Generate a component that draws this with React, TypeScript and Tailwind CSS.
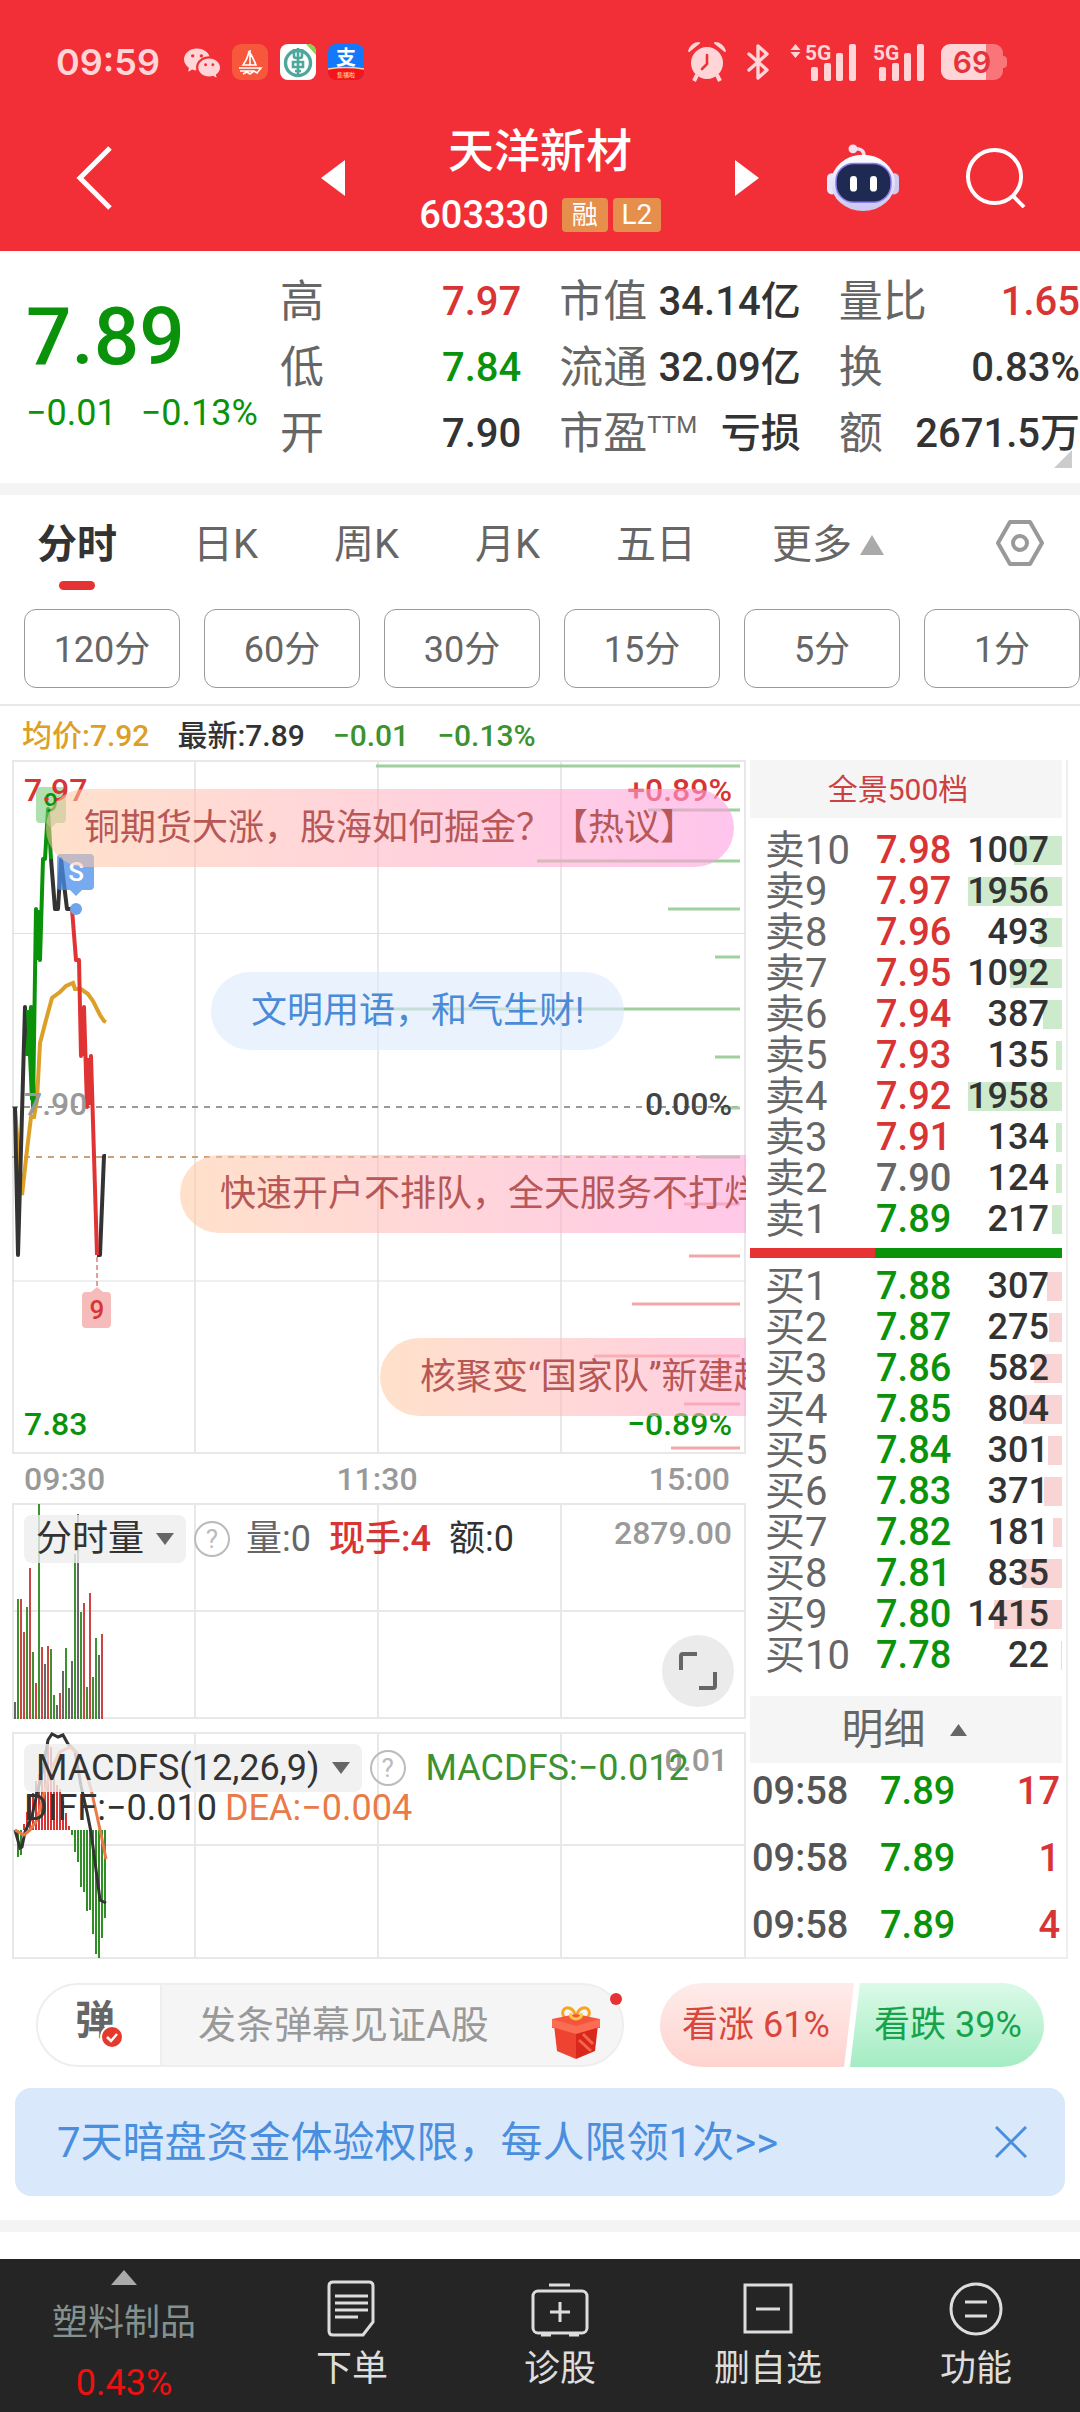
import { BsWechat } from "react-icons/bs";

const periods = ["120分", "60分", "30分", "15分", "5分", "1分"];
const tabs = ["日K", "周K", "月K", "五日"];

const stats = [
  { label: "高", value: "7.97", color: "text-[#d83434]" },
  { label: "市值", value: "34.14亿", color: "text-[#333]" },
  { label: "量比", value: "1.65", color: "text-[#d83434]" },
  { label: "低", value: "7.84", color: "text-[#0a930a]" },
  { label: "流通", value: "32.09亿", color: "text-[#333]" },
  { label: "换", value: "0.83%", color: "text-[#333]" },
  { label: "开", value: "7.90", color: "text-[#333]" },
  { label: "市盈", sup: "TTM", value: "亏损", color: "text-[#333]" },
  { label: "额", value: "2671.5万", color: "text-[#333]" },
];

const RED = "text-[#d83434]";
const GREEN = "text-[#0a930a]";
const GRAY = "text-[#666]";

type Order = { name: string; price: string; volume: number; color: string };

const sells: Order[] = [
  { name: "卖10", price: "7.98", volume: 1007, color: RED },
  { name: "卖9", price: "7.97", volume: 1956, color: RED },
  { name: "卖8", price: "7.96", volume: 493, color: RED },
  { name: "卖7", price: "7.95", volume: 1092, color: RED },
  { name: "卖6", price: "7.94", volume: 387, color: RED },
  { name: "卖5", price: "7.93", volume: 135, color: RED },
  { name: "卖4", price: "7.92", volume: 1958, color: RED },
  { name: "卖3", price: "7.91", volume: 134, color: RED },
  { name: "卖2", price: "7.90", volume: 124, color: GRAY },
  { name: "卖1", price: "7.89", volume: 217, color: GREEN },
];

const buys: Order[] = [
  { name: "买1", price: "7.88", volume: 307, color: GREEN },
  { name: "买2", price: "7.87", volume: 275, color: GREEN },
  { name: "买3", price: "7.86", volume: 582, color: GREEN },
  { name: "买4", price: "7.85", volume: 804, color: GREEN },
  { name: "买5", price: "7.84", volume: 301, color: GREEN },
  { name: "买6", price: "7.83", volume: 371, color: GREEN },
  { name: "买7", price: "7.82", volume: 181, color: GREEN },
  { name: "买8", price: "7.81", volume: 835, color: GREEN },
  { name: "买9", price: "7.80", volume: 1415, color: GREEN },
  { name: "买10", price: "7.78", volume: 22, color: GREEN },
];

const trades = [
  { time: "09:58", price: "7.89", volume: 17 },
  { time: "09:58", price: "7.89", volume: 1 },
  { time: "09:58", price: "7.89", volume: 4 },
];

// [y, x start, color]
const depthLines: [number, number, string][] = [
  [6, 364, "#9fd09f"],
  [50, 636, "#9fd09f"],
  [101, 525, "#9fd09f"],
  [149, 656, "#9fd09f"],
  [197, 703, "#9fd09f"],
  [249, 366, "#9fd09f"],
  [297, 703, "#9fd09f"],
  [348, 711, "#9fd09f"],
  [397, 688, "#9fd09f"],
  [444, 672, "#f3a8a8"],
  [496, 677, "#f3a8a8"],
  [544, 620, "#f3a8a8"],
  [596, 582, "#f3a8a8"],
  [644, 672, "#f3a8a8"],
  [688, 659, "#f3a8a8"],
];

const volumeHeights = [
  17, 120, 120, 87, 112, 151, 67, 36, 215, 72, 55, 73, 70, 24, 14, 26, 48, 71, 31, 58, 165, 205, 107,
  116, 32, 126, 42, 81, 64, 85,
];
const volumeColors = "kgrrgrgrgrkrggkrkgkkgkgrgrggkr";
const barColors: Record<string, string> = { k: "#666", g: "#3b922f", r: "#cc4444" };

const macdEnds = [
  125, 123, 92, 80, 65, 61, 49, 42, 31, 19, 10, 15, 42, 53, 57, 69, 81, 94, 103, 120, 130, 155, 160,
  179, 178, 202, 222, 226, 206, 186,
];

function StatusBar() {
  return (
    <div className="flex h-[124px] items-center justify-between pl-14 pr-[73px] text-[#ffd5d7]">
      <div className="flex items-center">
        <span className="mr-6 font-['Inter',sans-serif] text-[36px] font-semibold leading-10">09:59</span>
        <BsWechat className="mr-3 size-9" />
        <svg className="mr-3 size-9" viewBox="0 0 36 36" fill="none">
          <rect width="36" height="36" rx="9" fill="#f7583c" />
          <path d="M18 6v15M17 7c-1 6-3 10-6 14h13c-2-5-4-9-7-14M7 24h22l-4 5-3-2-4 3-3-2-4 2M8 27h14" stroke="#fff" strokeWidth="1.6" />
        </svg>
        <svg className="mr-3 size-9" viewBox="0 0 36 36" fill="none">
          <rect width="36" height="36" rx="8" fill="#fff" />
          <path d="M26 0h2a8 8 0 0 1 8 8v3z" fill="#8bcf4e" />
          <circle cx="18" cy="19" r="12.5" stroke="#4fa69a" strokeWidth="3.4" />
          <path d="M14 5v7q0 2 2 2h4q2 0 2-2V5M18 4v27M13 18h10v5H13zM15 27h6" stroke="#4fa69a" strokeWidth="2.6" />
        </svg>
        <svg className="size-9" viewBox="0 0 36 36">
          <rect width="36" height="36" rx="8" fill="#1478fa" />
          <path d="M0 25q18-3 36 0v3a8 8 0 0 1-8 8H8a8 8 0 0 1-8-8z" fill="#f5141b" />
          <path d="M0 25q18-3 36 0" stroke="#ffcf9a" strokeWidth="1.5" fill="none" />
          <text x="18" y="21" textAnchor="middle" fontSize="20" fontWeight="700" fill="#fff">支</text>
          <text x="18" y="33" textAnchor="middle" fontSize="6" fill="#ffe0b0">集福啦</text>
        </svg>
      </div>
      <div className="flex items-center">
        <svg className="mr-5 h-10 w-[38px]" viewBox="0 0 38 40" fill="none">
          <circle cx="19" cy="21" r="16" fill="currentColor" />
          <path d="M1 9q3-8 10-8zM37 9q-3-8-10-8z" fill="currentColor" stroke="currentColor" strokeWidth="2" strokeLinejoin="round" />
          <path d="M9 33l-3 6M29 33l3 6" stroke="currentColor" strokeWidth="4" />
          <path d="M19 13v9l-5 5" stroke="#f22f37" strokeWidth="2.6" strokeLinecap="round" />
        </svg>
        <svg className="mr-5 h-10 w-6" viewBox="0 0 24 40" fill="none" stroke="currentColor" strokeWidth="3.4" strokeLinejoin="round" strokeLinecap="round">
          <path d="M3 12l18 16-9 8V4l9 8L3 28" />
        </svg>
        <div className="flex">
          <svg className="mr-1 h-[38px] w-[11px]" viewBox="0 0 11 38" fill="currentColor">
            <path d="M5.5 1l5 6h-10zM5.5 15l5-6h-10z" />
          </svg>
          <Signal />
          <span className="w-4" />
          <Signal />
        </div>
        <div className="ml-4 flex items-center">
          <div className="flex h-9 w-[62px] items-center justify-center rounded-[9px] bg-[linear-gradient(90deg,#ffd5d7_73%,#fa757a_73%)] font-['Inter',sans-serif] text-[30px] font-semibold text-[#e6323c]">
            69
          </div>
          <div className="h-3 w-1 rounded-r bg-[#fa757a]" />
        </div>
      </div>
    </div>
  );
}

function Signal() {
  return (
    <svg className="h-[38px] w-[52px] overflow-visible" viewBox="0 0 52 38" fill="currentColor">
      <text x="0" y="17" fontSize="21" fontWeight="700">5G</text>
      <rect x="6" y="24" width="7" height="14" rx="2" />
      <rect x="19" y="20" width="7" height="18" rx="2" />
      <rect x="31" y="10" width="7" height="28" rx="2" />
      <rect x="44" y="1" width="7" height="37" rx="2" />
    </svg>
  );
}

function Robot() {
  return (
    <svg className="h-[68px] w-[74px]" viewBox="0 0 74 70" preserveAspectRatio="none" fill="none">
      <defs>
        <linearGradient id="shell" x1="0" y1="0" x2="0" y2="1">
          <stop offset="0" stopColor="#fff" />
          <stop offset="1" stopColor="#c9c6f2" />
        </linearGradient>
      </defs>
      <path d="M38 12q0-8-10-7" stroke="#f1dcee" strokeWidth="3.5" />
      <circle cx="27" cy="5" r="4.5" fill="#f4e2f2" />
      <rect x="1" y="30" width="10" height="22" rx="5" fill="#e6e7fb" />
      <rect x="63" y="30" width="10" height="22" rx="5" fill="#cfcaf2" />
      <ellipse cx="37" cy="40" rx="32" ry="29" fill="url(#shell)" />
      <rect x="10" y="20" width="55" height="40" rx="18" fill="#1f2a52" stroke="#8b7cf0" strokeWidth="1.5" />
      <rect x="24" y="33" width="7" height="16" rx="3.5" fill="#fff" />
      <rect x="44" y="33" width="7" height="16" rx="3.5" fill="#fff" />
    </svg>
  );
}

function Header() {
  return (
    <header className="bg-[#f22f37] text-white">
      <StatusBar />
      <div className="grid h-[127px] grid-cols-[1fr_390px_1fr]">
        <div className="flex items-center justify-between pb-5 pl-[76px]">
          <button aria-label="返回">
            <svg className="h-[66px] w-[38px]" viewBox="0 0 38 66" fill="none" stroke="currentColor" strokeWidth="5">
              <path d="M34 3L4 33l30 30" />
            </svg>
          </button>
          <button aria-label="上一只">
            <svg className="h-9 w-6" viewBox="0 0 24 36" fill="currentColor">
              <path d="M24 0v36L0 18z" />
            </svg>
          </button>
        </div>
        <div className="flex flex-col items-center">
          <h1 className="text-[46px] font-medium leading-[54px]">天洋新材</h1>
          <div className="mt-[15px] flex h-11 items-center gap-[5px]">
            <span className="mr-2 text-[38px] font-medium">603330</span>
            <span className="flex h-[34px] w-[46px] items-center justify-center rounded-sm bg-[#e68e4c] text-[26px]">融</span>
            <span className="flex h-[34px] w-12 items-center justify-center rounded-sm bg-[#e68e4c] text-[28px]">L2</span>
          </div>
        </div>
        <div className="flex items-center justify-between pb-5 pr-[54px]">
          <button aria-label="下一只">
            <svg className="h-9 w-6" viewBox="0 0 24 36" fill="currentColor">
              <path d="M0 0v36l24-18z" />
            </svg>
          </button>
          <button aria-label="智能助手">
            <Robot />
          </button>
          <button aria-label="搜索">
            <svg className="size-[60px]" viewBox="0 0 61 61" fill="none" stroke="currentColor" strokeWidth="4">
              <circle cx="29" cy="29" r="27" />
              <path d="M47 48l12 12" />
            </svg>
          </button>
        </div>
      </div>
    </header>
  );
}

function Summary() {
  return (
    <section className="relative flex pb-4 pt-[18px]">
      <div className="w-[280px] shrink-0 pl-[26px] pt-6 text-[#0a930a]">
        <p className="text-[80px] font-medium leading-[88px]">7.89</p>
        <p className="mt-2 flex gap-6 whitespace-nowrap text-[36px] leading-[48px]">
          <span>−0.01</span>
          <span>−0.13%</span>
        </p>
      </div>
      <dl className="grid flex-1 grid-cols-3 gap-x-[38px] whitespace-nowrap">
        {stats.map((item) => (
          <div key={item.label} className="flex justify-between leading-[66px]">
            <dt className="flex text-[44px] text-[#666]">
              {item.label}
              {item.sup && <span className="text-[24px] leading-[48px]">{item.sup}</span>}
            </dt>
            <dd className={`text-[40px] font-medium ${item.color}`}>{item.value}</dd>
          </div>
        ))}
      </dl>
      <svg className="absolute bottom-[15px] right-2 size-[18px]" viewBox="0 0 18 18" fill="#ccc">
        <path d="M18 0v18H0z" />
      </svg>
    </section>
  );
}

function ChartTabs() {
  return (
    <nav className="border-b-2 border-[#e8e8e8] pb-4">
      <div className="flex h-[97px] items-start justify-between pl-[37px] pr-9 pt-[22px] text-[40px] leading-[56px] text-[#666]">
        <button className="flex flex-col items-center font-bold text-[#333]">
          分时
          <span className="mt-2 h-[9px] w-9 rounded-full bg-[#e63232]" />
        </button>
        {tabs.map((tab) => (
          <button key={tab}>{tab}</button>
        ))}
        <button className="flex items-center gap-2">
          更多
          <svg className="h-5 w-6" viewBox="0 0 24 20" fill="#aaa">
            <path d="M12 0l12 20H0z" />
          </svg>
        </button>
        <button aria-label="设置" className="ml-9">
          <svg className="mt-[2px] size-12" viewBox="0 0 48 48" fill="none" stroke="#999" strokeWidth="4" strokeLinejoin="round">
            <path d="M14 3h20l12 21-12 21H14L2 24z" />
            <circle cx="24" cy="24" r="7" />
          </svg>
        </button>
      </div>
      <div className="mt-[17px] grid grid-cols-6 gap-6 pl-6">
        {periods.map((period) => (
          <button key={period} className="h-[79px] rounded-xl border border-[#999] pt-[2px] text-[36px] text-[#666]">
            {period}
          </button>
        ))}
      </div>
    </nav>
  );
}

function Grid({ height }: { height: number }) {
  return (
    <g stroke="#e8e8e8" strokeWidth="2" fill="none">
      <rect x="1" y="1" width="732" height={height - 2} />
      <path d={`M183 0V${height}M366 0V${height}M549 0V${height}`} />
    </g>
  );
}

function PriceChart() {
  return (
    <div className="relative h-[694px] overflow-hidden text-[32px] font-medium leading-9">
      <svg className="size-full" viewBox="0 0 734 694" preserveAspectRatio="none" fill="none">
        <Grid height={694} />
        <path d="M0 173.5h734M0 521h734" stroke="#e0e0e0" />
        <path d="M0 347h728" stroke="#999" strokeWidth="2" strokeDasharray="6 6" />
        <path d="M0 397h728" stroke="#c9a27a" strokeWidth="2" strokeDasharray="6 6" />
        {depthLines.map(([y, x, color]) => (
          <path key={y} d={`M${x} ${y}H728`} stroke={color} strokeWidth="3" />
        ))}
        <path
          d="M3 350L10 435L15 390L19 357L22 357L25 340L28 283L34 260L40 238L48 232L54 226L61 223L63 229L69 229L76 234L81 241L88 255L92 261L94 262"
          stroke="#dc9f28"
          strokeWidth="4"
        />
        <g strokeWidth="4" strokeLinejoin="round">
          <path d="M3 347L6 495L13 247L15 296" stroke="#333" />
          <path d="M39 99L43 149L46 149L49 99L55 149L60 149" stroke="#333" />
          <path d="M85 495L88 495L92 396L94 396" stroke="#333" />
          <path d="M15 296L19 247L21 347L24 149L28 200L31 99L33 99L36 49L39 99" stroke="#0a930a" />
          <path d="M17 250L21 340M25 150L26 200" stroke="#0a930a" strokeWidth="6" />
          <path d="M60 149L64 200L67 200L69 296L72 247L75 347L79 296L85 495" stroke="#e03434" />
          <path d="M70 249L71 296M76 298L77 345" stroke="#e03434" strokeWidth="6" />
        </g>
        <path d="M85 497v30" stroke="#c04040" strokeDasharray="5 3" />
        <path d="M28 27h22a4 4 0 0 1 4 4v28a4 4 0 0 1-4 4h-6l-5 5-5-5h-6a4 4 0 0 1-4-4V31a4 4 0 0 1 4-4z" fill="#7bc97b" fillOpacity="0.6" />
        <path d="M49 94h29a4 4 0 0 1 4 4v28a4 4 0 0 1-4 4h-8l-6 6-6-6h-9a4 4 0 0 1-4-4V98a4 4 0 0 1 4-4z" fill="#4a8ee8" fillOpacity="0.75" />
        <circle cx="64" cy="149" r="6" fill="#6ea4ec" />
        <path d="M74 532h5l6-5 6 5h4a4 4 0 0 1 4 4v28a4 4 0 0 1-4 4H74a4 4 0 0 1-4-4v-28a4 4 0 0 1 4-4z" fill="#f6bcbc" />
        <g fontSize="26" textAnchor="middle">
          <text x="39" y="52" fill="#0a930a">9</text>
          <text x="64" y="121" fill="#fff">S</text>
          <text x="85" y="559" fill="#d83434">9</text>
        </g>
      </svg>
      <span className="absolute left-3 top-3 text-[#d83434]">7.97</span>
      <span className="absolute right-[14px] top-3 text-[#d83434]">+0.89%</span>
      <span className="absolute left-3 top-[326px] text-[#999]">7.90</span>
      <span className="absolute right-[14px] top-[326px] text-[#444]">0.00%</span>
      <span className="absolute bottom-3 left-3 text-[#0a930a]">7.83</span>
      <span className="absolute bottom-3 right-[14px] text-[#0a930a]">−0.89%</span>
      <div className="absolute inset-0 whitespace-nowrap text-[36px] font-normal leading-[78px] text-[#b85757]">
        <p className="absolute left-[34px] top-[29px] rounded-full bg-linear-to-r from-[#ffc8a0]/55 via-[#ffb0c0]/55 to-[#ff9ee0]/60 px-[38px]">
          铜期货大涨，股海如何掘金？【热议】
        </p>
        <p className="absolute left-[199px] top-[212px] rounded-full bg-[#dceafd]/60 px-10 text-[#4a8bd8]">
          文明用语，和气生财!
        </p>
        <p className="absolute left-[168px] top-[395px] rounded-full bg-linear-to-r from-[#ffc8a0]/55 via-[#ffb0c0]/55 to-[#ff9ee0]/60 px-10">
          快速开户不排队，全天服务不打烊！
        </p>
        <p className="absolute left-[368px] top-[578px] rounded-full bg-linear-to-r from-[#ffc8a0]/55 via-[#ffb0c0]/55 to-[#ff9ee0]/60 px-10">
          核聚变“国家队”新建超导项目
        </p>
      </div>
    </div>
  );
}

function IndicatorSelect({ name }: { name: string }) {
  return (
    <>
      <button className="flex h-12 items-center gap-3 rounded-lg bg-[#eee]/80 px-3 text-[#333]">
        {name}
        <svg className="h-3 w-[18px]" viewBox="0 0 18 12" fill="#666">
          <path d="M0 0h18L9 12z" />
        </svg>
      </button>
      <button aria-label="说明" className="ml-2 flex size-9 items-center justify-center rounded-full border-2 border-[#bbb] text-[26px] text-[#bbb]">
        ?
      </button>
    </>
  );
}

function VolumeChart() {
  return (
    <div className="relative h-[216px]">
      <svg className="size-full" viewBox="0 0 734 216" preserveAspectRatio="none" fill="none">
        <Grid height={216} />
        <path d="M0 108h734" stroke="#e8e8e8" strokeWidth="2" />
        {volumeHeights.map((h, i) => (
          <rect key={i} x={2 + i * 3} y={216 - h} width="2" height={h} fill={barColors[volumeColors[i]]} />
        ))}
      </svg>
      <div className="absolute left-3 top-3 flex items-center whitespace-nowrap text-[36px] leading-[48px]">
        <IndicatorSelect name="分时量" />
        <span className="ml-4 text-[#666]">量:0</span>
        <span className="ml-[18px] font-medium text-[#d83434]">现手:4</span>
        <span className="ml-[18px] text-[#333]">额:0</span>
      </div>
      <span className="absolute right-[14px] top-3 text-[32px] font-medium leading-9 text-[#999]">2879.00</span>
      <button aria-label="全屏" className="absolute bottom-3 right-3 flex size-[72px] items-center justify-center rounded-full bg-[#ebebeb]">
        <svg className="size-[38px]" viewBox="0 0 38 38" fill="none" stroke="#666" strokeWidth="4">
          <path d="M2 18V4q0-2 2-2h14M36 20v14q0 2-2 2H20" />
        </svg>
      </button>
    </div>
  );
}

function MacdChart() {
  return (
    <div className="relative mt-[13px] h-[227px]">
      <svg className="size-full" viewBox="0 0 734 227" preserveAspectRatio="none" fill="none">
        <Grid height={227} />
        <path d="M0 113h734" stroke="#e8e8e8" strokeWidth="2" />
        {macdEnds.map((end, i) => (
          <rect
            key={i}
            x={5 + i * 3}
            y={Math.min(end, 98)}
            width="2"
            height={Math.abs(end - 98)}
            fill={end < 98 ? "#d83434" : "#2f8f25"}
          />
        ))}
        <path
          d="M3 98L8 116L10 115L13 100L20 84L26 57L31 38L36 8L40 2L46 5L51 3L56 12L63 19L69 54L75 80L79 100L85 145L88 168L94 171"
          stroke="#333"
          strokeWidth="3"
        />
        <path
          d="M3 98L12 103L18 98L25 88L31 65L40 35L48 20L58 15L65 21L73 38L79 57L85 84L90 107L94 127"
          stroke="#ea7a48"
          strokeWidth="3"
        />
      </svg>
      <span className="absolute right-[18px] top-[10px] text-[32px] font-medium leading-9 text-[#999]">0.01</span>
      <div className="absolute left-3 top-3 whitespace-nowrap text-[36px]">
        <div className="flex items-center leading-[48px]">
          <IndicatorSelect name="MACDFS(12,26,9)" />
          <span className="ml-5 text-[#3b922f]">MACDFS:−0.012</span>
        </div>
        <div className="flex gap-2 leading-8">
          <span className="text-[#333]">DIFF:−0.010</span>
          <span className="text-[#ea7a48]">DEA:−0.004</span>
        </div>
      </div>
    </div>
  );
}

function OrderRows({ orders, bar }: { orders: Order[]; bar: string }) {
  return (
    <table className="w-full table-fixed text-[38px] leading-[41px]">
      <tbody>
        {orders.map((order) => (
          <tr key={order.name} className="h-[41px]">
            <td className="w-[126px] p-0 pl-[15px] text-[40px] text-[#666]">{order.name}</td>
            <td className={`w-[84px] p-0 font-medium ${order.color}`}>{order.price}</td>
            <td className="relative p-0 pr-[13px] text-right text-[36px] font-medium text-[#333]">
              <span className={`absolute right-0 top-[6px] h-[29px] ${bar}`} style={{ width: Math.max(order.volume / 20.8, 1) }} />
              <span className="relative">{order.volume}</span>
            </td>
          </tr>
        ))}
      </tbody>
    </table>
  );
}

function OrderBook() {
  return (
    <aside className="w-[322px] shrink-0 border-b-2 border-r-2 border-[#eee] pl-1 pr-1">
      <button className="block h-[58px] w-full bg-[#f5f5f5] pr-4 text-[30px] text-[#cc4040]">全景500档</button>
      <div className="pt-3">
        <OrderRows orders={sells} bar="bg-[#cdeacd]" />
      </div>
      <div className="my-2 flex h-[10px] bg-[#0a930a]">
        <div className="w-2/5 bg-[#e63232]" />
      </div>
      <OrderRows orders={buys} bar="bg-[#f9d4d4]" />
      <button className="mt-5 flex h-[67px] w-full items-center justify-center gap-6 bg-[#f5f5f5] pr-1 text-[42px] text-[#666]">
        明细
        <svg className="h-3 w-[17px]" viewBox="0 0 17 12" fill="#666">
          <path d="M8.5 0L17 12H0z" />
        </svg>
      </button>
      <table className="w-full table-fixed text-[38px] font-medium leading-[56px]">
        <tbody>
          {trades.map((trade, index) => (
            <tr key={index} className="h-[67px] align-top last:h-14">
              <td className="w-[130px] p-0 pl-[2px] text-[#555]">{trade.time}</td>
              <td className="w-[84px] p-0 text-[#0a930a]">{trade.price}</td>
              <td className="p-0 pr-[2px] text-right text-[#d83434]">{trade.volume}</td>
            </tr>
          ))}
        </tbody>
      </table>
    </aside>
  );
}

function CommentBar() {
  return (
    <div className="flex justify-between pl-9 pr-9 pt-6">
      <div className="relative flex h-[84px] w-[588px] rounded-full border-2 border-[#eee] bg-[#f5f5f5]">
        <button className="relative w-[124px] rounded-l-full border-r-2 border-[#eee] bg-white pb-2 pr-2 text-[40px] font-bold text-[#666]">
          弹
          <svg className="absolute left-[62px] top-10 size-6" viewBox="0 0 24 24" fill="none">
            <circle cx="12" cy="12" r="11" fill="#e6392e" stroke="#fff" strokeWidth="2" />
            <path d="M7 12l4 4 6-7" stroke="#fff" strokeWidth="2.5" />
          </svg>
        </button>
        <input
          aria-label="发送弹幕"
          placeholder="发条弹幕见证A股"
          className="min-w-0 flex-1 bg-transparent pl-9 text-[38px] outline-none placeholder:text-[#999]"
        />
        <svg className="mr-[21px] mt-5 h-[54px] w-[50px]" viewBox="0 0 50 54" fill="none">
          <path d="M25 14C17 16 10 12 12 6S24 2 25 14C26 2 36 0 38 6s-5 10-13 8z" stroke="#f5a623" strokeWidth="3" />
          <path d="M1 14l24-5 24 5v9H1z" fill="#f4553f" />
          <path d="M3 20l22 7v27L6 46z" fill="#ee4330" />
          <path d="M47 20l-22 7v27l19-8z" fill="#d9271e" />
          <path d="M1 14l24 7 24-7v8l-24 7-24-7z" fill="#fb6d52" />
          <path d="M20 8q-2 5 5 6 7-1 5-6" stroke="#ffc83d" strokeWidth="3" />
          <path d="M32 29l10 10M28 35l12 11" stroke="#f4654c" strokeWidth="3" />
        </svg>
        <span className="absolute right-0 top-2 size-3 rounded-full bg-[#e63232]" />
      </div>
      <div className="relative flex h-[84px] w-96 text-[36px]">
        <svg className="absolute inset-0 size-full" viewBox="0 0 384 84" preserveAspectRatio="none">
          <defs>
            <linearGradient id="up" x1="0" y1="0" x2="0" y2="1">
              <stop offset="0" stopColor="#feecea" />
              <stop offset="1" stopColor="#fed3cf" />
            </linearGradient>
            <linearGradient id="down" x1="0" y1="0" x2="0" y2="1">
              <stop offset="0" stopColor="#dcfae8" />
              <stop offset="1" stopColor="#a3ecc2" />
            </linearGradient>
          </defs>
          <path d="M42 0h152l-10 84H42a42 42 0 0 1 0-84z" fill="url(#up)" />
          <path d="M200 0h142a42 42 0 0 1 0 84H190z" fill="url(#down)" />
        </svg>
        <button className="relative flex-1 text-[#d9463c]">看涨 61%</button>
        <button className="relative flex-1 text-[#16a34a]">看跌 39%</button>
      </div>
    </div>
  );
}

function BottomNav() {
  return (
    <footer className="flex h-[153px] bg-[#252525] text-[36px] leading-[44px] text-[#ddd]">
      <button className="flex w-[248px] flex-col items-center pt-[11px]">
        <svg className="h-[15px] w-[26px]" viewBox="0 0 26 15" fill="#aaa">
          <path d="M13 0l13 15H0z" />
        </svg>
        <span className="mt-4 text-[#84928f]">塑料制品</span>
        <span className="mt-4 text-[#ee1111]">0.43%</span>
      </button>
      <NavItem label="下单">
        <path d="M10 3h36q4 0 4 4v36L40 56H10q-4 0-4-4V7q0-4 4-4z" />
        <path d="M12 17h33M12 24h33M12 31h33M12 38h23" />
      </NavItem>
      <NavItem label="诊股">
        <rect x="2" y="12" width="54" height="42" rx="5" />
        <path d="M18 6h21M29 23v20M19 33h20M10 56h10M38 56h10" />
      </NavItem>
      <NavItem label="删自选">
        <rect x="6" y="6" width="46" height="47" />
        <path d="M17 30h24" />
      </NavItem>
      <NavItem label="功能">
        <circle cx="29" cy="30" r="25" />
        <path d="M18 23h22M18 37h22" />
      </NavItem>
    </footer>
  );
}

function NavItem({ label, children }: { label: string; children: React.ReactNode }) {
  return (
    <button className="flex flex-1 flex-col items-center pt-5">
      <svg className="h-[60px] w-[58px]" viewBox="0 0 58 60" fill="none" stroke="#ddd" strokeWidth="3">
        {children}
      </svg>
      <span className="mt-2">{label}</span>
    </button>
  );
}

export default function App() {
  return (
    <div className="w-full overflow-hidden bg-white font-['Roboto','Noto_Sans_CJK_SC',sans-serif] text-[#333]">
      <Header />
      <Summary />
      <div className="h-3 bg-[#f4f4f4]" />
      <ChartTabs />
      <main>
        <div className="flex h-[54px] items-center gap-7 pl-[22px] pt-1 text-[30px] font-medium">
          <span className="text-[#dc9f28]">均价:7.92</span>
          <span>最新:7.89</span>
          <span className="text-[#3b922f]">−0.01</span>
          <span className="text-[#3b922f]">−0.13%</span>
        </div>
        <div className="flex pl-3 pr-3">
          <div className="min-w-0 flex-1">
            <PriceChart />
            <div className="flex h-[49px] items-center justify-between pl-3 pr-4 text-[32px] font-medium text-[#999]">
              <span>09:30</span>
              <span>11:30</span>
              <span>15:00</span>
            </div>
            <VolumeChart />
            <MacdChart />
          </div>
          <OrderBook />
        </div>
        <CommentBar />
        <div className="mx-[15px] mt-[21px] flex h-[108px] items-center justify-between rounded-2xl bg-[#dae8fc] pl-[42px] pr-[38px] text-[42px] text-[#4a8ede]">
          <a href="#">7天暗盘资金体验权限，每人限领1次&gt;&gt;</a>
          <button aria-label="关闭">
            <svg className="size-[32px]" viewBox="0 0 32 32" fill="none" stroke="currentColor" strokeWidth="3">
              <path d="M1 1l30 30M31 1L1 31" />
            </svg>
          </button>
        </div>
        <div className="mb-[27px] mt-6 h-3 bg-[#f4f4f4]" />
      </main>
      <BottomNav />
    </div>
  );
}
